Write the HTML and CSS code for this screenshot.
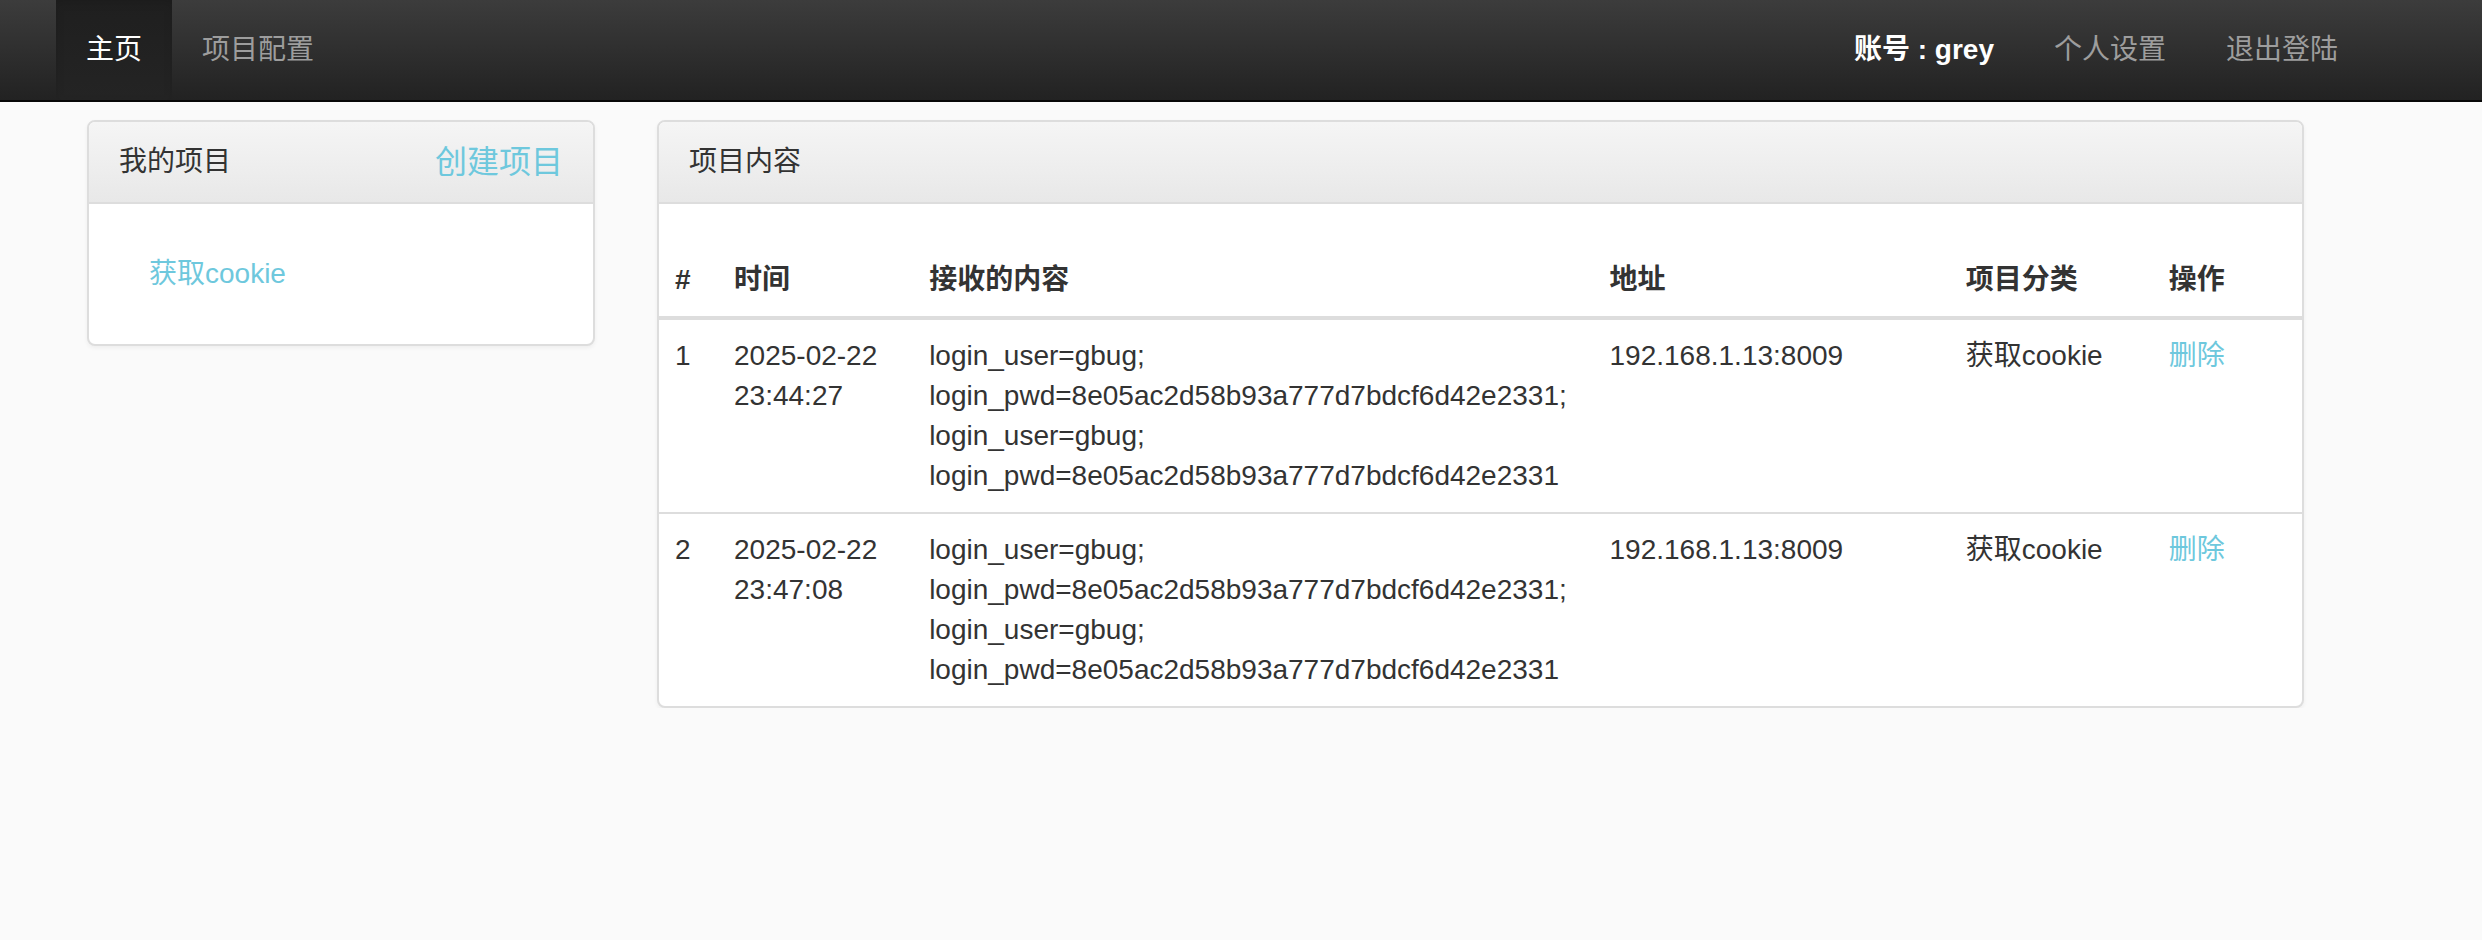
FILE: index.html
```html
<!DOCTYPE html>
<html lang="zh-CN">
<head>
<meta charset="utf-8">
<title>主页</title>
<link rel="stylesheet" href="styles.css">
</head>
<body>
<nav class="navbar">
  <ul class="nav nav-left">
    <li class="active"><a href="#">主页</a></li>
    <li><a href="#">项目配置</a></li>
  </ul>
  <ul class="nav nav-right">
    <li class="account"><a href="#">账号 : grey</a></li>
    <li><a href="#">个人设置</a></li>
    <li><a href="#">退出登陆</a></li>
  </ul>
</nav>
<main class="main">
  <section class="panel panel-side">
    <div class="panel-heading side-heading">
      <span class="title">我的项目</span>
      <a class="create" href="#">创建项目</a>
    </div>
    <div class="panel-body">
      <ul class="pills">
        <li><a href="#">获取cookie</a></li>
      </ul>
    </div>
  </section>
  <section class="panel panel-content">
    <div class="panel-heading"><span class="title">项目内容</span></div>
    <div class="content-body">
      <table class="table">
        <colgroup>
          <col class="c-num"><col class="c-time"><col class="c-data"><col class="c-addr"><col class="c-cat"><col class="c-op">
        </colgroup>
        <thead>
          <tr><th>#</th><th>时间</th><th>接收的内容</th><th>地址</th><th>项目分类</th><th>操作</th></tr>
        </thead>
        <tbody>
          <tr>
            <td>1</td>
            <td>2025-02-22 23:44:27</td>
            <td>login_user=gbug; login_pwd=8e05ac2d58b93a777d7bdcf6d42e2331; login_user=gbug; login_pwd=8e05ac2d58b93a777d7bdcf6d42e2331</td>
            <td>192.168.1.13:8009</td>
            <td>获取cookie</td>
            <td><a href="#">删除</a></td>
          </tr>
          <tr>
            <td>2</td>
            <td>2025-02-22 23:47:08</td>
            <td>login_user=gbug; login_pwd=8e05ac2d58b93a777d7bdcf6d42e2331; login_user=gbug; login_pwd=8e05ac2d58b93a777d7bdcf6d42e2331</td>
            <td>192.168.1.13:8009</td>
            <td>获取cookie</td>
            <td><a href="#">删除</a></td>
          </tr>
        </tbody>
      </table>
    </div>
  </section>
</main>
</body>
</html>
```
FILE: styles.css
```css
* { box-sizing: border-box; }
html, body { margin: 0; padding: 0; }
body {
  background: #fafafa;
  color: #333;
  font-family: "Liberation Sans", Arial, "Noto Sans CJK SC", sans-serif;
  font-size: 28px;
  line-height: 40px;
}
a { text-decoration: none; color: #6ec8dd; }
ul { list-style: none; margin: 0; padding: 0; }

.navbar {
  display: flex;
  justify-content: space-between;
  height: 102px;
  padding: 0 114px 0 56px;
  background: linear-gradient(to bottom, #3c3c3c 0%, #222 100%);
  border-bottom: 2px solid #080808;
}
.nav { display: flex; }
.nav li a {
  display: block;
  padding: 30px 30px;
  line-height: 40px;
  color: #9d9d9d;
}
.nav li.active a {
  color: #fff;
  background: linear-gradient(to bottom, #1f1f1f 0%, #242424 100%);
  box-shadow: inset 0 3px 9px rgba(0, 0, 0, 0.1);
}
.nav li.account a { color: #fff; font-weight: bold; }

.main {
  display: flex;
  align-items: flex-start;
  gap: 62px;
  padding: 18px 0 0 87px;
}
.panel {
  background: #fff;
  border: 2px solid #ddd;
  border-radius: 8px;
  box-shadow: 0 2px 4px rgba(0, 0, 0, 0.05);
  overflow: hidden;
}
.panel-side { width: 508px; }
.panel-content { width: 1647px; }
.panel-heading {
  display: flex;
  align-items: center;
  height: 82px;
  padding: 0 30px;
  background: linear-gradient(to bottom, #f5f5f5 0%, #e8e8e8 100%);
  border-bottom: 2px solid #ddd;
  color: #333;
}
.side-heading { justify-content: space-between; }
.create { font-size: 32px; line-height: 40px; }
.panel-body { padding: 30px; }
.pills li a { display: block; padding: 20px 30px; line-height: 40px; }

.content-body { padding-top: 40px; }
.table {
  width: 100%;
  border-collapse: collapse;
  table-layout: fixed;
}
.c-num { width: 59px; }
.c-time { width: 195px; }
.c-data { width: 680px; }
.c-addr { width: 356px; }
.c-cat { width: 203px; }
.c-op { width: 149px; }
.table th, .table td {
  padding: 16px;
  text-align: left;
  vertical-align: top;
  line-height: 40px;
}
.table th { font-weight: bold; border-bottom: 4px solid #ddd; }
.table tbody tr + tr td { border-top: 2px solid #ddd; }
```
